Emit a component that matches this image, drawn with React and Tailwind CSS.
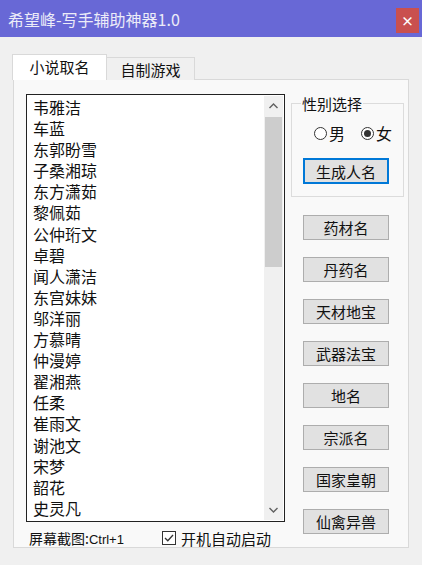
import { useState } from 'react';

const names = [
  '韦雅洁', '车蓝', '东郭盼雪', '子桑湘琼', '东方潇茹', '黎佩茹', '公仲珩文',
  '卓碧', '闻人潇洁', '东宫妹妹', '邬洋丽', '方慕晴', '仲漫婷', '翟湘燕',
  '任柔', '崔雨文', '谢池文', '宋梦', '韶花', '史灵凡',
];

const tools = ['药材名', '丹药名', '天材地宝', '武器法宝', '地名', '宗派名', '国家皇朝', '仙禽异兽'];

const font = { fontFamily: '"Noto Sans CJK SC", "Noto Sans", sans-serif' };

function Radio({ checked, label, onClick }) {
  return (
    <button onClick={onClick} className="flex items-center gap-[2px] text-[16px] leading-none text-[#111]">
      <span className="w-[13px] h-[13px] rounded-full border border-[#333] bg-white flex items-center justify-center">
        {checked && <span className="w-[7px] h-[7px] rounded-full bg-[#333]" />}
      </span>
      {label}
    </button>
  );
}

export default function App() {
  const [tab, setTab] = useState(0);
  const [gender, setGender] = useState('女');
  const [autoStart, setAutoStart] = useState(true);

  return (
    <div className="w-[422px] h-[565px] bg-[#f0f0f0] flex flex-col overflow-hidden" style={font}>
      {/* 标题栏 */}
      <div className="h-[37px] bg-[#6868d6] flex items-center justify-between pl-[8px] pr-[3px] shrink-0">
        <span className="text-[16px] text-[#ececf8] leading-none">希望峰-写手辅助神器1.0</span>
        <button className="self-start mt-[8px] w-[23px] h-[25px] bg-[#c9504f] text-white text-[13px] font-bold flex items-center justify-center leading-none">
          ×
        </button>
      </div>

      <div className="pt-[17px] pl-[12px] flex flex-col">
        {/* 标签页 */}
        <div className="flex items-end h-[26px] relative z-10">
          <button
            onClick={() => setTab(0)}
            className="w-[95px] h-[26px] bg-white border border-b-0 border-[#d9d9d9] text-[15px] text-[#111] leading-none pb-[2px]"
          >
            小说取名
          </button>
          <button
            onClick={() => setTab(1)}
            className="w-[88px] h-[23px] bg-[#f0f0f0] border border-l-0 border-b-0 border-[#d9d9d9] text-[15px] text-[#111] leading-none"
          >
            自制游戏
          </button>
        </div>

        {/* 面板 */}
        <div className="ml-[1px] -mt-[1px] w-[396px] h-[469px] bg-[#f9f9f9] border border-[#d9d9d9] flex pl-[12px] pt-[14px]">
          <div className="flex flex-col">
            {/* 列表框 */}
            <div className="w-[259px] h-[428px] bg-white border border-[#222] flex">
              <div className="flex-1 pt-[2px] pl-[6px]">
                {names.map((n) => (
                  <div key={n} className="text-[16px] leading-[21.1px] text-[#111]">{n}</div>
                ))}
              </div>
              <div className="w-[19px] my-[1px] mr-[1px] bg-[#f0f0f0] flex flex-col">
                <div className="h-[20px] flex items-center justify-center">
                  <svg width="9" height="6" viewBox="0 0 9 6">
                    <polyline points="0.5,5 4.5,1 8.5,5" fill="none" stroke="#606060" strokeWidth="1.4" />
                  </svg>
                </div>
                <div className="mt-[1px] mx-[1px] h-[150px] bg-[#cdcdcd]" />
                <div className="flex-1" />
                <div className="h-[20px] flex items-center justify-center">
                  <svg width="9" height="6" viewBox="0 0 9 6">
                    <polyline points="0.5,1 4.5,5 8.5,1" fill="none" stroke="#606060" strokeWidth="1.4" />
                  </svg>
                </div>
              </div>
            </div>

            {/* 底部 */}
            <div className="flex items-center h-[25px] pt-[7px]">
              <span className="pl-[3px] text-[14px] text-[#111] leading-none">
                屏幕截图:<span className="text-[13px]" style={{ fontFamily: '"Liberation Sans", sans-serif' }}>Ctrl+1</span>
              </span>
              <button
                onClick={() => setAutoStart(!autoStart)}
                className="ml-[38px] flex items-center gap-[5px] text-[15px] text-[#111] leading-none"
              >
                <span className="w-[14px] h-[14px] border border-[#333] bg-white flex items-center justify-center">
                  {autoStart && (
                    <svg width="10" height="8" viewBox="0 0 10 8">
                      <polyline points="1,4 3.8,6.8 9,1" fill="none" stroke="#333" strokeWidth="1.3" />
                    </svg>
                  )}
                </span>
                开机自动启动
              </button>
            </div>
          </div>

          {/* 右侧 */}
          <div className="ml-[6px] flex flex-col">
            <fieldset className="w-[108px] h-[101px] border border-[#dcdcdc] mt-[2px] px-[11px]">
              <legend className="ml-[-2px] px-[1px] text-[15px] text-[#111] leading-none">性别选择</legend>
              <div className="flex items-center gap-[16px] mt-[14px] pl-[11px]">
                <Radio checked={gender === '男'} label="男" onClick={() => setGender('男')} />
                <Radio checked={gender === '女'} label="女" onClick={() => setGender('女')} />
              </div>
              <button className="mt-[17px] w-[86px] h-[26px] bg-[#e1e1e1] border-2 border-[#0078d7] text-[15px] text-[#111] leading-none">
                生成人名
              </button>
            </fieldset>

            <div className="flex flex-col gap-[17px] mt-[18px] pl-[12px]">
              {tools.map((t) => (
                <button
                  key={t}
                  className="w-[86px] h-[25px] bg-[#e1e1e1] border border-[#adadad] text-[15px] text-[#111] leading-none"
                >
                  {t}
                </button>
              ))}
            </div>
          </div>
        </div>
      </div>
    </div>
  );
}
